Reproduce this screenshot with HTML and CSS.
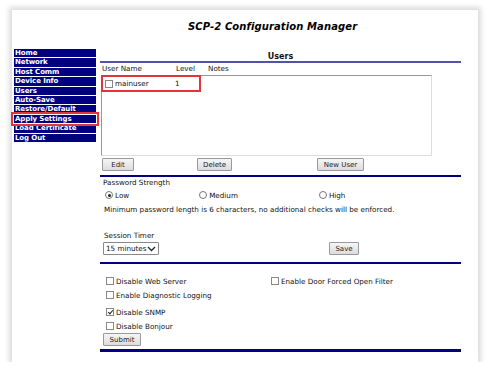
FILE: index.html
```html
<!DOCTYPE html>
<html>
<head>
  <link rel="stylesheet" href="styles.css">
</head>
<body>
  <div class="frame">
    <div class="header">
      <h1>SCP-2 Configuration Manager</h1>
    </div>

    <div class="layout">
      <ul class="nav">
        <li>Home</li>
        <li>Network</li>
        <li>Host Comm</li>
        <li>Device Info</li>
        <li>Users</li>
        <li>Auto-Save</li>
        <li>Restore/Default</li>
        <li class="marked">Apply Settings</li>
        <li>Load Certificate</li>
        <li>Log Out</li>
      </ul>

      <div class="main">
        <h2 class="section-title">Users</h2>

        <div class="user-cols">
          <span>User Name</span>
          <span>Level</span>
          <span>Notes</span>
        </div>
        <div class="user-list">
          <div class="user-row">
            <input type="checkbox" class="box">
            <span class="user-name">mainuser</span>
            <span class="user-level">1</span>
          </div>
        </div>

        <div class="user-actions">
          <button class="btn btn-edit">Edit</button>
          <button class="btn btn-delete">Delete</button>
          <button class="btn btn-new">New User</button>
        </div>

        <hr class="rule">

        <div class="label">Password Strength</div>
        <div class="radios">
          <label class="radio r-low"><input type="radio" name="strength" checked>Low</label>
          <label class="radio r-med"><input type="radio" name="strength">Medium</label>
          <label class="radio r-high"><input type="radio" name="strength">High</label>
        </div>
        <div class="note">Minimum password length is 6 characters, no additional checks will be enforced.</div>

        <div class="label timer-label">Session Timer</div>
        <div class="timer-row">
          <div class="select">15 minutes
            <svg width="9" height="6" viewBox="0 0 9 6"><path d="M1 1 L4.5 4.5 L8 1" fill="none" stroke="#222" stroke-width="1.3"/></svg>
          </div>
          <button class="btn btn-save">Save</button>
        </div>

        <hr class="rule">

        <div class="options">
          <label class="check c-web"><input type="checkbox" class="box">Disable Web Server</label>
          <label class="check c-door"><input type="checkbox" class="box">Enable Door Forced Open Filter</label>
          <label class="check c-diag"><input type="checkbox" class="box">Enable Diagnostic Logging</label>
          <label class="check c-snmp"><input type="checkbox" class="box" checked>Disable SNMP</label>
          <label class="check c-bonjour"><input type="checkbox" class="box">Disable Bonjour</label>
        </div>
        <button class="btn btn-submit">Submit</button>

        <hr class="rule rule-end">
      </div>
    </div>
  </div>
</body>
</html>
```

FILE: styles.css
```css
body {
  margin: 0;
  background: #ffffff;
  font-family: "DejaVu Sans", Verdana, sans-serif;
  font-size: 7.2px;
  color: #111;
}
.frame {
  margin: 10px 0 0 12px;
  width: 466px;
  height: 352px;
  background: #fff;
  box-shadow: 0 0 5px 3px rgba(0,0,0,0.14);
}
.header {
  height: 39px;
  padding-left: 88px;
  display: flex;
  align-items: center;
}
.header h1 {
  margin: -6px 0 0 88px;
  font-size: 10px;
  font-style: italic;
  font-weight: bold;
  letter-spacing: 0.1px;
  color: #000;
}
.layout {
  display: flex;
}
.nav {
  list-style: none;
  margin: 0 0 0 2px;
  padding: 0;
  width: 82px;
}
.nav li {
  height: 8.4px;
  line-height: 9px;
  margin-bottom: 1px;
  padding-left: 1px;
  background: #000080;
  color: #fff;
  font-weight: bold;
  font-size: 7px;
  letter-spacing: -0.1px;
  overflow: hidden;
}
.nav li.marked {
  outline: 2px solid #e0353a;
  outline-offset: 1px;
  overflow: visible;
}
.main {
  margin-left: 4px;
  width: 361px;
}
.section-title {
  margin: 0;
  height: 12px;
  line-height: 16px;
  font-size: 8px;
  text-align: center;
  border-bottom: 2px solid #5252aa;
}
.user-cols {
  display: grid;
  grid-template-columns: 74px 32px auto;
  height: 12px;
  line-height: 12px;
  padding-left: 2px;
}
.user-list {
  margin-left: 1px;
  width: 329px;
  height: 79px;
  border: 1px solid;
  border-color: #999 #ddd #ddd #999;
}
.user-row {
  display: flex;
  align-items: center;
  width: 95px;
  height: 15px;
  outline: 2px solid #e0353a;
  outline-offset: -1px;
  padding-left: 3px;
}
.box {
  appearance: none;
  margin: 0 2px 0 0;
  width: 8px;
  height: 8px;
  border: 1px solid #888;
  background: #fff;
  position: relative;
}
.box:checked::after {
  content: "";
  position: absolute;
  left: 2px;
  top: 0;
  width: 2px;
  height: 4px;
  border: solid #222;
  border-width: 0 1.3px 1.3px 0;
  transform: rotate(40deg);
}
.user-name {
  width: 60px;
}
.btn {
  font-family: "DejaVu Sans", Verdana, sans-serif;
  font-size: 7px;
  height: 13px;
  padding: 0;
  color: #222;
  background: linear-gradient(#f6f6f6, #dcdcdc);
  border: 1px solid #999;
  border-radius: 1px;
}
.user-actions {
  display: flex;
  margin-top: 2px;
  padding-left: 2px;
}
.btn-edit { width: 32px; }
.btn-delete { width: 35px; margin-left: 63px; }
.btn-new { width: 47px; margin-left: 85px; }
.rule {
  margin: 4px 0 0 0;
  height: 2px;
  border: 0;
  background: #000080;
}
.label {
  height: 11px;
  line-height: 12px;
  padding-left: 3px;
}
.radios {
  display: flex;
  height: 14px;
  align-items: center;
  padding-left: 5px;
}
.radio {
  display: flex;
  align-items: center;
}
.radio input {
  appearance: none;
  margin: 0 2px 0 0;
  width: 8px;
  height: 8px;
  border: 1px solid #777;
  border-radius: 50%;
  background: #fff;
  position: relative;
}
.radio input:checked::after {
  content: "";
  position: absolute;
  left: 1.5px;
  top: 1.5px;
  width: 3px;
  height: 3px;
  border-radius: 50%;
  background: #222;
}
.r-med { margin-left: 70px; }
.r-high { margin-left: 81px; }
.note {
  height: 16px;
  line-height: 16px;
  padding-left: 4px;
}
.timer-label {
  margin-top: 12px;
  padding-left: 4px;
}
.timer-row {
  display: flex;
  align-items: center;
  margin-top: 1px;
  padding-left: 3px;
}
.select {
  display: flex;
  align-items: center;
  justify-content: space-between;
  width: 50px;
  height: 11px;
  padding: 0 2px;
  border: 1px solid #888;
  border-radius: 1px;
  background: #fff;
}
.btn-save { width: 30px; margin-left: 170px; }
.timer-row + .rule { margin-top: 7px; }
.options {
  display: grid;
  grid-template-columns: 165px auto;
  padding: 10px 0 0 6px;
}
.check {
  display: flex;
  align-items: center;
  height: 14px;
}
.c-diag, .c-snmp, .c-bonjour { grid-column: 1; }
.c-snmp { margin-top: 3px; }
.btn-submit {
  width: 38px;
  margin-left: 3px;
}
.rule-end {
  margin-top: 3px;
  height: 3px;
}
```
